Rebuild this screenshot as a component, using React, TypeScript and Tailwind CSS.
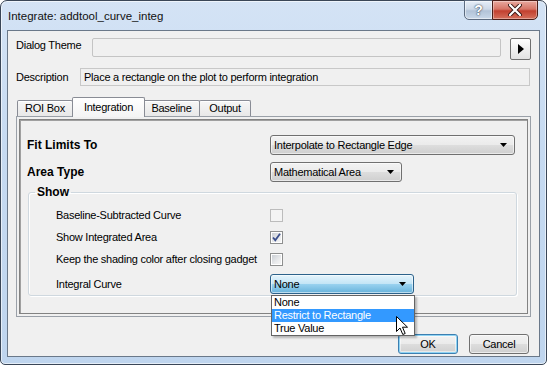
import clsx from 'clsx';
import { ReactNode } from 'react';

const grayGrad =
  'bg-[linear-gradient(to_bottom,#f2f2f2_0%,#ebebeb_48%,#dddddd_52%,#cfcfcf_100%)]';
const blueGrad =
  'bg-[linear-gradient(to_bottom,#e5f4fc_0%,#c4e5f6_48%,#98d1ef_52%,#68b3db_100%)]';

const Arrow = () => (
  <svg width="7" height="4" viewBox="0 0 7 4" className="flex-none">
    <polygon points="0,0 7,0 3.5,4" fill="#000" />
  </svg>
);

const Combo = ({
  value,
  className,
  active
}: {
  value: string;
  className?: string;
  active?: boolean;
}) => (
  <div
    className={clsx(
      'h-[20px] flex items-center rounded-[3px] border pl-[3px] pr-[7px] shadow-[inset_0_0_0_1px_rgba(255,255,255,0.55)]',
      active ? 'border-[#2c628b] ' + blueGrad : 'border-[#707070] ' + grayGrad,
      className
    )}
  >
    <span className="flex-1 truncate leading-[18px]">{value}</span>
    <Arrow />
  </div>
);

const Check = ({ checked, disabled }: { checked?: boolean; disabled?: boolean }) => (
  <div
    className={clsx(
      'w-[13px] h-[13px] border p-px',
      disabled ? 'border-[#bcbcbc] bg-[#f4f4f4]' : 'border-[#8e8f8f] bg-white'
    )}
  >
    <div
      className={clsx(
        'w-full h-full relative',
        disabled
          ? 'bg-[#f4f4f4]'
          : 'bg-[linear-gradient(135deg,#cbcfd5_0%,#e9eaec_60%,#f6f6f6_100%)]'
      )}
    >
      {checked && (
        <svg width="11" height="11" viewBox="0 0 11 11" className="absolute -left-px -top-px">
          <path d="M2 5.5 L4.3 8.2 L9 1.8" fill="none" stroke="#3b4f8c" strokeWidth="1.8" />
        </svg>
      )}
    </div>
  </div>
);

const Row = ({ label, children }: { label: string; children: ReactNode }) => (
  <div className="h-[22px] flex items-center">
    <span className="w-[214px] flex-none">{label}</span>
    {children}
  </div>
);

const Tab = ({ label, active, className }: { label: string; active?: boolean; className?: string }) => (
  <div
    className={clsx(
      'flex items-center justify-center border border-[#898c95] rounded-t-[2px]',
      active
        ? 'h-[20px] border-b-0 bg-[linear-gradient(to_bottom,#ffffff_0%,#f4f4f4_100%)] relative z-10 -mx-[1px]'
        : 'h-[16px] mb-px border-b-0 -ml-px first:ml-0 bg-[linear-gradient(to_bottom,#f6f6f6_0%,#e8e8e8_100%)] shadow-[inset_0_1px_0_#fff]',
      className
    )}
  >
    {label}
  </div>
);

const Button = ({ label, focused }: { label: string; focused?: boolean }) => (
  <div
    className={clsx(
      'w-[60px] h-[20px] flex items-center justify-center rounded-[3px] border',
      grayGrad,
      focused
        ? 'border-[#3c7fb1] shadow-[inset_0_0_0_1px_#8fd3f3,inset_0_0_0_2px_rgba(255,255,255,0.5)]'
        : 'border-[#707070] shadow-[inset_0_0_0_1px_rgba(255,255,255,0.6)]'
    )}
  >
    {label}
  </div>
);

export default function App() {
  return (
    <div className="w-[547px] h-[365px] bg-white overflow-hidden font-['Liberation_Sans',Arial,sans-serif] text-black">
      <div className="relative w-[547px] h-[365px] rounded-t-[7px] rounded-b-[5px] border border-[#3a4657] bg-[linear-gradient(to_bottom,#d4e3f5_0%,#c6daf1_40%,#bfd5ee_100%)] shadow-[inset_0_0_0_1px_rgba(255,255,255,0.6)] flex flex-col">
        {/* title bar */}
        <div className="h-[29px] flex-none flex items-center pl-[7px] pt-[2px] text-[11.5px] text-[#111]">
          Integrate: addtool_curve_integ
        </div>
        <div className="absolute top-[-1px] right-[8px] flex">
          <div className="w-[29px] h-[20px] rounded-bl-[5px] border border-[#5c6b80] bg-[linear-gradient(to_bottom,#e6eef8_0%,#cdd9e8_45%,#b2c3d8_55%,#c9d8e9_100%)] flex items-center justify-center text-[14px] font-bold text-white [text-shadow:0_0_2px_#3a4657,0_0_1px_#3a4657] shadow-[inset_0_0_0_1px_rgba(255,255,255,0.5)]">
            ?
          </div>
          <div className="w-[46px] h-[20px] -ml-px rounded-br-[5px] border border-[#4b1e18] bg-[linear-gradient(to_bottom,#e9a99f_0%,#d67566_45%,#c2402f_55%,#d5705c_100%)] flex items-center justify-center shadow-[inset_0_0_0_1px_rgba(255,255,255,0.35)]">
            <svg width="14" height="12" viewBox="0 0 14 12">
              <path d="M2 1 L12 11 M12 1 L2 11" stroke="#3a1a16" strokeWidth="4" strokeLinecap="round" />
              <path d="M2 1 L12 11 M12 1 L2 11" stroke="#fff" strokeWidth="2.2" strokeLinecap="round" />
            </svg>
          </div>
        </div>

        {/* client area */}
        <div className="ml-[6px] w-[533px] h-[327px] flex-none border border-[#6a7889] bg-[#f0f0f0] text-[11px] tracking-[-0.25px] flex flex-col pl-[8px] pt-[7px]">
          <div className="h-[22px] flex items-start">
            <span className="w-[76px] flex-none h-[15px] leading-[15px]">Dialog Theme</span>
            <div className="w-[409px] h-[19px] rounded-[2px] border border-[#c4c4c4] bg-[#f0f0f0]" />
            <div className="ml-[9px] w-[21px] h-[22px] flex items-center justify-center border border-[#707070] rounded-[2px] bg-[linear-gradient(to_bottom,#ffffff_0%,#f0f0f0_50%,#e2e2e2_100%)]">
              <svg width="6" height="10" viewBox="0 0 6 10">
                <polygon points="0,0 6,5 0,10" fill="#000" />
              </svg>
            </div>
          </div>

          <div className="mt-[8px] h-[18px] flex items-center">
            <span className="w-[64px] flex-none">Description</span>
            <div className="w-[450px] h-[18px] border border-[#c8c8c8] bg-[#f0f0f0] pl-[3px] leading-[16px]">
              Place a rectangle on the plot to perform integration
            </div>
          </div>

          {/* tabs */}
          <div className="mt-[11px] h-[20px] flex items-end pl-[1px] relative z-10">
            <Tab label="ROI Box" className="w-[56px]" />
            <Tab label="Integration" active className="w-[73px]" />
            <Tab label="Baseline" className="w-[57px]" />
            <Tab label="Output" className="w-[52px]" />
          </div>
          <div className="-mt-px w-[515px] h-[201px] border border-[#9aa0a8] p-[2px] relative">
            <div className="h-[195px] border border-[#828282] shadow-[inset_1px_1px_0_#a0a0a0] flex flex-col pl-[7px]">
              <div className="mt-[15px] h-[20px] flex items-center">
                <span className="w-[243px] flex-none font-bold text-[12px] tracking-normal">Fit Limits To</span>
                <Combo value="Interpolate to Rectangle Edge" className="w-[245px]" />
              </div>
              <div className="mt-[7px] h-[20px] flex items-center">
                <span className="w-[243px] flex-none font-bold text-[12px] tracking-normal">Area Type</span>
                <Combo value="Mathematical Area" className="w-[132px]" />
              </div>
              <fieldset className="mt-[3px] ml-px w-[489px] rounded-[3px] border border-[#cfd8df] shadow-[inset_1px_1px_0_#fff,1px_1px_0_#fff] pb-px">
                <legend className="ml-[6px] px-[2px] font-bold text-[12px] leading-[14px] tracking-normal">Show</legend>
                <div className="mt-[5px] pl-[27px]">
                  <Row label="Baseline-Subtracted Curve">
                    <Check disabled />
                  </Row>
                  <Row label="Show Integrated Area">
                    <Check checked />
                  </Row>
                  <Row label="Keep the shading color after closing gadget">
                    <Check />
                  </Row>
                  <div className="mt-[4px] h-[20px] flex items-center">
                    <span className="w-[214px] flex-none">Integral Curve</span>
                    <div className="relative">
                      <Combo value="None" active className="w-[144px]" />
                      <div className="absolute top-[21px] left-px w-[144px] border border-[#646464] bg-white z-20 shadow-[2px_2px_2px_rgba(0,0,0,0.25)] leading-[13px]">
                        <div className="h-[13px] pl-[2px]">None</div>
                        <div className="h-[13px] pl-[2px] bg-[#3399ff] text-white">Restrict to Rectangle</div>
                        <div className="h-[13px] pl-[2px]">True Value</div>
                        <svg
                          width="13"
                          height="20"
                          viewBox="0 0 13 20"
                          className="absolute left-[124px] top-[20px]"
                        >
                          <path
                            d="M0.5 0.5 L0.5 15.5 L4 12 L6.8 18.5 L9.2 17.5 L6.5 11.2 L11.5 11.2 Z"
                            fill="#fff"
                            stroke="#000"
                            strokeWidth="1"
                            strokeLinejoin="miter"
                          />
                        </svg>
                      </div>
                    </div>
                  </div>
                </div>
              </fieldset>
            </div>
          </div>

          {/* buttons */}
          <div className="mt-[17px] flex justify-end gap-[11px] pr-[10px]">
            <Button label="OK" focused />
            <Button label="Cancel" />
          </div>
        </div>
      </div>
    </div>
  );
}
